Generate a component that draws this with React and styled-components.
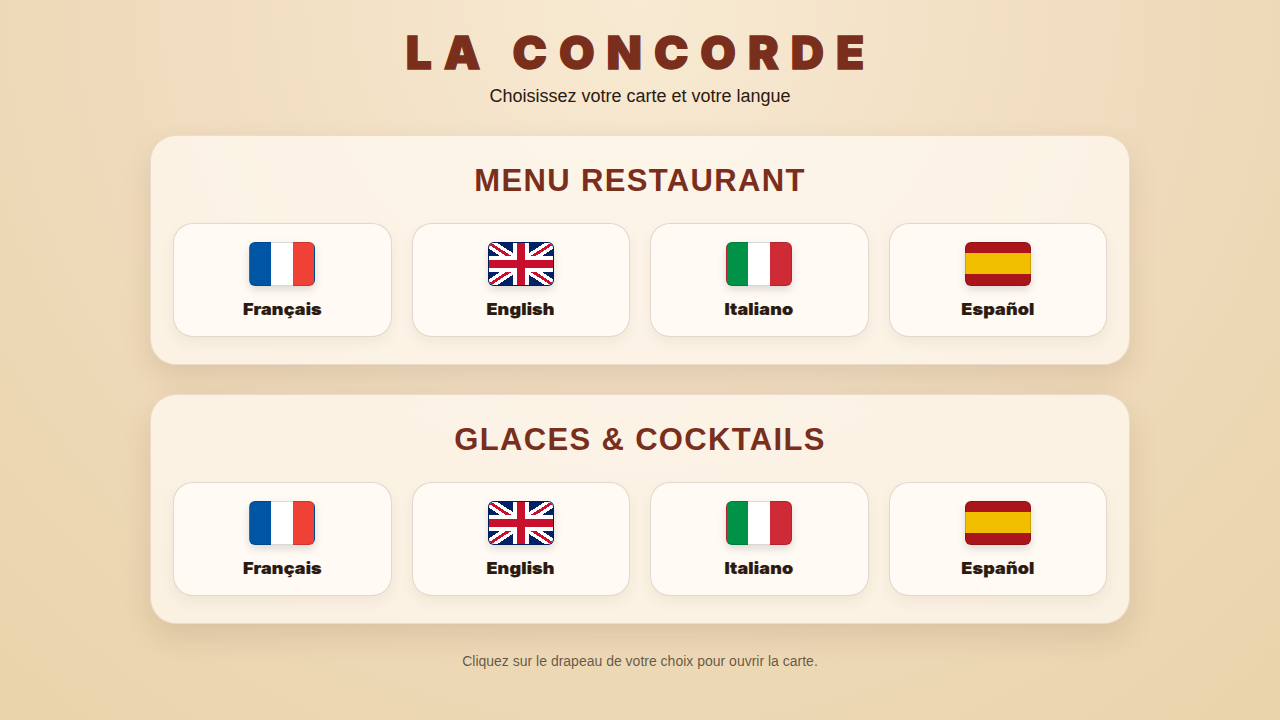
import React from "react";
import styled, { createGlobalStyle, css } from "styled-components";

const GlobalStyle = createGlobalStyle`
  *, *::before, *::after { box-sizing: border-box; }
  body {
    margin: 0;
    min-height: 100vh;
    color: #2b1a10;
    font-family: "Liberation Sans", Arial, sans-serif;
    background: radial-gradient(circle at top, #f8ead3 0%, #f0dcbe 50%, #e9d3aa 100%) no-repeat #e9d3aa;
  }
`;

const Page = styled.main`
  display: flex;
  flex-direction: column;
  align-items: center;
  min-height: 100vh;
  padding: 24px 20px;
`;

const Header = styled.header`
  text-align: center;
  margin-bottom: 29px;
`;

const Brand = styled.h1`
  margin: 0;
  padding-left: 2px;
  font-family: "Arial Black", Inter, sans-serif;
  font-size: 46px;
  font-weight: 900;
  line-height: 57px;
  letter-spacing: 12px;
  word-spacing: -1px;
  color: #7a2e1c;
  -webkit-text-stroke: 1.3px #7a2e1c;
`;

const Tagline = styled.p`
  margin: 5px 0 0;
  font-size: 18px;
  line-height: 20px;
`;

const Sections = styled.div`
  display: grid;
  gap: 29px;
  width: 100%;
  max-width: 980px;
`;

const Panel = styled.section`
  height: 230px;
  padding: 22px;
  border: 1px solid rgba(122, 46, 28, 0.12);
  border-radius: 26px;
  background: rgba(255, 250, 242, 0.75);
  box-shadow: 0 12px 30px rgba(80, 45, 15, 0.12);
`;

const PanelTitle = styled.h2`
  margin: 5px 0 24px;
  font-size: 31px;
  line-height: 36px;
  letter-spacing: 1.35px;
  text-align: center;
  color: #7a2e1c;
`;

const Languages = styled.div`
  display: grid;
  grid-template-columns: repeat(4, 1fr);
  gap: 20px;
`;

const LanguageCard = styled.a`
  display: flex;
  flex-direction: column;
  align-items: center;
  height: 114px;
  padding: 18px 12px 0;
  border: 1px solid rgba(80, 45, 25, 0.16);
  border-radius: 20px;
  background: #fffaf3;
  box-shadow: 0 6px 14px rgba(80, 45, 15, 0.06);
  cursor: pointer;
`;

const flags = {
  fr: css`background-image: linear-gradient(to right, #0055a4 33.33%, #fff 33.33% 66.66%, #ef4135 66.66%);`,
  it: css`background-image: linear-gradient(to right, #009246 33.33%, #fff 33.33% 66.66%, #ce2b37 66.66%);`,
  es: css`background-image: linear-gradient(to bottom, #aa151b 25%, #f1bf00 25% 75%, #aa151b 75%);`,
  en: css`background-color: #012169;`,
};

const Flag = styled.span`
  flex: none;
  width: 66px;
  height: 44px;
  overflow: hidden;
  border: 1px solid rgba(0, 0, 0, 0.15);
  border-radius: 6px;
  box-shadow: 0 4px 8px rgba(0, 0, 0, 0.13);
  ${({ $code }) => flags[$code]}
`;

const Cross = styled.svg`
  display: block;
  width: 100%;
  height: 100%;
`;

const LanguageName = styled.span`
  margin-top: 12px;
  font-family: "Arial Black", Inter, sans-serif;
  font-size: 16.6px;
  font-weight: 900;
  line-height: 22px;
  letter-spacing: 0.15px;
  transform: scaleX(1.08);
  -webkit-text-stroke: 0.2px #2b1a10;
`;

const Hint = styled.p`
  margin: 28px 0 0;
  font-size: 14px;
  line-height: 18px;
  color: rgba(43, 26, 16, 0.7);
`;

const UnionJack = () => (
  <Cross viewBox="0 0 64 42" preserveAspectRatio="none" shapeRendering="crispEdges" aria-hidden="true">
    <path d="M0 0L64 42M64 0L0 42" stroke="#fff" strokeWidth="9.4" />
    <path d="M0 0L64 42M64 0L0 42" stroke="#c8102e" strokeWidth="2.8" />
    <path d="M32 0V42M0 21H64" stroke="#fff" strokeWidth="16" />
    <path d="M32 0V42M0 21H64" stroke="#c8102e" strokeWidth="8" />
  </Cross>
);

const languages = [
  { code: "fr", name: "Français" },
  { code: "en", name: "English" },
  { code: "it", name: "Italiano" },
  { code: "es", name: "Español" },
];

const menus = ["MENU RESTAURANT", "GLACES & COCKTAILS"];

export default function App() {
  return (
    <>
      <GlobalStyle />
      <Page>
        <Header>
          <Brand>LA CONCORDE</Brand>
          <Tagline>Choisissez votre carte et votre langue</Tagline>
        </Header>
        <Sections>
          {menus.map((title) => (
            <Panel key={title}>
              <PanelTitle>{title}</PanelTitle>
              <Languages>
                {languages.map(({ code, name }) => (
                  <LanguageCard key={code}>
                    <Flag $code={code}>{code === "en" && <UnionJack />}</Flag>
                    <LanguageName>{name}</LanguageName>
                  </LanguageCard>
                ))}
              </Languages>
            </Panel>
          ))}
        </Sections>
        <Hint>Cliquez sur le drapeau de votre choix pour ouvrir la carte.</Hint>
      </Page>
    </>
  );
}
